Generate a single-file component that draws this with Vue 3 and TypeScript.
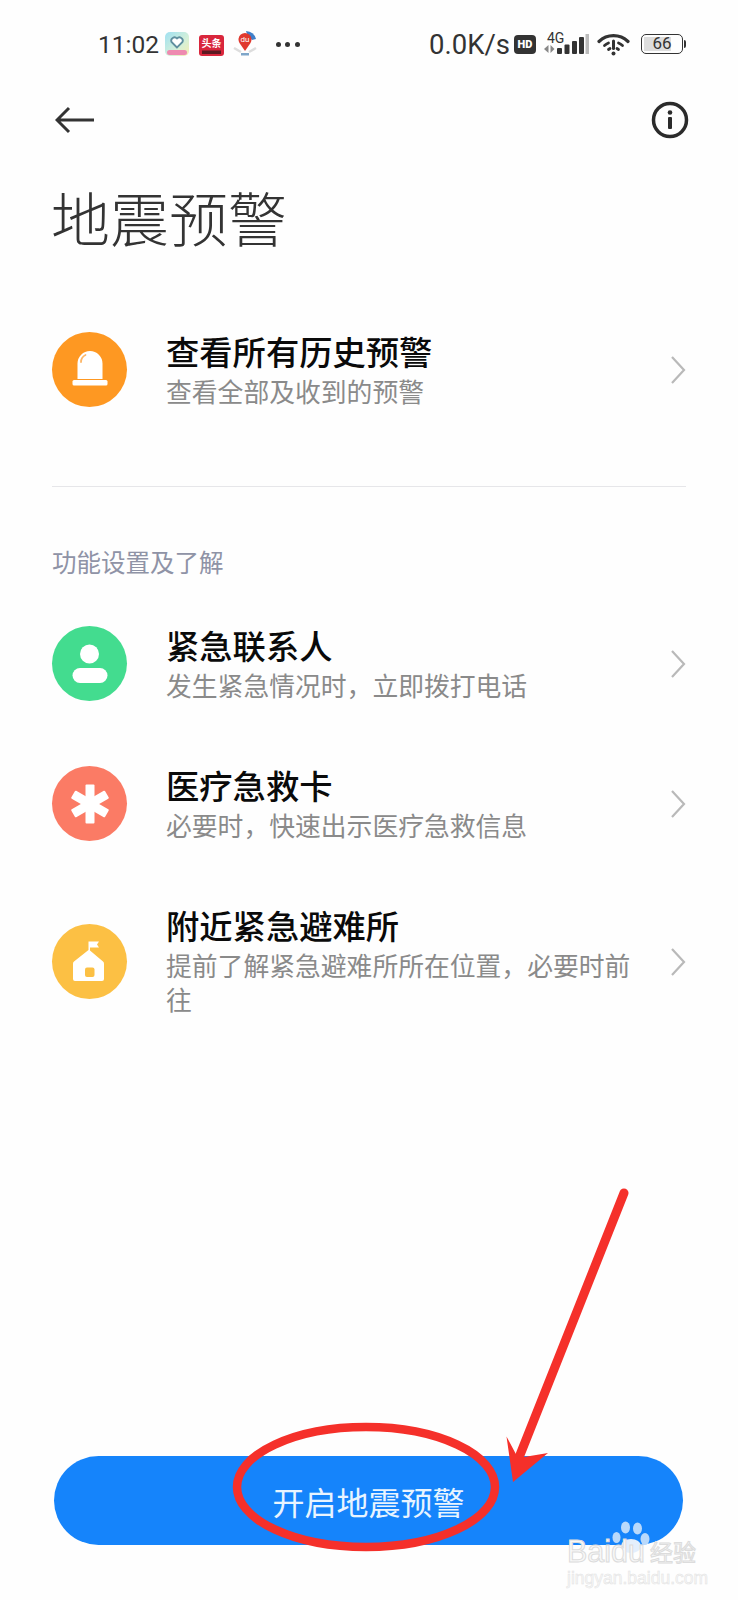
<script setup lang="ts">
interface Row {
    title: string;
    sub: string;
    color: string;
    icon: string;
}

const contacts: Row[] = [
    { title: "紧急联系人", sub: "发生紧急情况时，立即拨打电话", color: "#43dc8f", icon: "person" },
    { title: "医疗急救卡", sub: "必要时，快速出示医疗急救信息", color: "#fb7b65", icon: "star" },
    { title: "附近紧急避难所", sub: "提前了解紧急避难所所在位置，必要时前往", color: "#fcc044", icon: "house" },
];
</script>

<template>
    <div class="page">
        <div class="status">
            <span class="time">11:02</span>
            <svg class="app app-a" width="24" height="24" viewBox="0 0 24 24">
                <defs>
                    <linearGradient id="appBg" x1="0" y1="0" x2="1" y2="1">
                        <stop offset="0" stop-color="#9fe0f2" />
                        <stop offset="0.6" stop-color="#d5f0d8" />
                        <stop offset="1" stop-color="#f7eeb0" />
                    </linearGradient>
                </defs>
                <rect width="24" height="24" rx="5" fill="url(#appBg)" />
                <rect x="2" y="18" width="20" height="5" rx="2.5" fill="#ee8ab0" />
                <path d="M12 15.500 6.500 10a3.300 3.300 0 0 1 5.500-3.500 3.300 3.300 0 0 1 5.500 3.500z" fill="#fff" stroke="#5f8f9f" stroke-width="1.800" />
            </svg>
            <svg class="app app-b" width="25" height="21" viewBox="0 0 25 21">
                <rect width="25" height="21" rx="3" fill="#d9263c" />
                <rect x="3" y="15.500" width="19" height="3.500" fill="#5c1a22" />
                <text x="12.500" y="12" class="app-text" text-anchor="middle">头条</text>
            </svg>
            <svg class="app app-c" width="24" height="26" viewBox="0 0 24 26">
                <path d="M13 0a11 11 0 0 1 10 8l-4 1-5-6z" fill="#3f7fc9" />
                <path d="M1 17l7 4M23 17l-7 4" stroke="#ddd" stroke-width="2.500" />
                <path d="M12 20 6.500 12a6.500 6.500 0 1 1 11 0z" fill="#e0392f" />
                <text x="12" y="11" class="du-text" text-anchor="middle">du</text>
                <rect x="8" y="22" width="8" height="2.500" fill="#7fa6c9" />
            </svg>
            <span class="dots">
                <i></i><i></i><i></i>
            </span>
            <span class="status-right">
                <span class="speed">0.0K/s</span>
                <span class="hd">HD</span>
                <span class="signal">
                    <span class="four-g">4G</span>
                    <svg width="46" height="24" viewBox="0 0 46 24">
                        <path d="M5.500 13v8L1 17zM7.500 13v8l4-4z" fill="#888" />
                        <rect x="14" y="16" width="5" height="6" rx="1" fill="#333" />
                        <rect x="21.500" y="12.500" width="5" height="9.500" rx="1" fill="#333" />
                        <rect x="29" y="9" width="5" height="13" rx="1" fill="#333" />
                        <rect x="36" y="5" width="5" height="17" rx="1" fill="#333" />
                        <rect x="42.500" y="2" width="3.500" height="20" fill="#bbb" />
                    </svg>
                </span>
                <svg class="wifi" width="33" height="24" viewBox="0 0 33 24">
                    <g fill="none" stroke="#333" stroke-linecap="round">
                        <path d="M2 9.500a21 21 0 0 1 29 0" stroke-width="3.200" />
                        <path d="M7.500 13.500a13 13 0 0 1 4-2.500M25.500 13.500a13 13 0 0 0-4-2.500" stroke-width="2.800" />
                        <path d="M11.500 17.500l1.500-1M21.500 17.500l-1.500-1" stroke-width="2.800" />
                        <path d="M16.500 9v7.500" stroke-width="3" />
                    </g>
                    <circle cx="16.500" cy="21.500" r="2" fill="#333" />
                </svg>
                <span class="battery">
                    <span class="battery-body"><span class="battery-fill"></span><span class="battery-num">66</span></span>
                    <span class="battery-cap"></span>
                </span>
            </span>
        </div>

        <div class="toolbar">
            <svg width="40" height="28" viewBox="0 0 40 28">
                <path d="M39 14H2M14 2 2 14l12 12" fill="none" stroke="#333" stroke-width="3" />
            </svg>
            <svg width="38" height="38" viewBox="0 0 38 38">
                <circle cx="19" cy="19" r="16.500" fill="none" stroke="#2b2b2b" stroke-width="3.500" />
                <circle cx="19" cy="11.500" r="2.300" fill="#2b2b2b" />
                <rect x="17" y="16" width="4" height="12" rx="1" fill="#2b2b2b" />
            </svg>
        </div>

        <h1 class="title">地震预警</h1>

        <div class="row first">
            <span class="circle" style="background: #fe9822">
                <svg width="40" height="40" viewBox="0 0 40 40">
                    <path d="M7.500 29V13.500a12.500 12.500 0 0 1 25 0V29z" fill="#fff" />
                    <rect x="2.500" y="30" width="35" height="5.500" rx="1.500" fill="#fff" />
                    <path d="M11 12a8 8 0 0 1 4.500-7" fill="none" stroke="#fdb768" stroke-width="1.800" stroke-linecap="round" />
                </svg>
            </span>
            <div class="text">
                <div class="row-title">查看所有历史预警</div>
                <div class="row-sub">查看全部及收到的预警</div>
            </div>
            <svg class="chevron" width="16" height="30" viewBox="0 0 16 30">
                <path d="M2 2 14 15 2 28" fill="none" stroke="#b9b9b9" stroke-width="2.200" />
            </svg>
        </div>

        <div class="divider"></div>
        <div class="section">功能设置及了解</div>

        <div class="list">
            <div v-for="item in contacts" :key="item.title" class="row" :class="{ tall: item.icon === 'house' }">
                <span class="circle" :style="{ background: item.color }">
                    <svg v-if="item.icon === 'person'" width="40" height="44" viewBox="0 0 40 44">
                        <circle cx="19.500" cy="12" r="9.500" fill="#fff" />
                        <rect x="2.500" y="26" width="35" height="15" rx="7.500" fill="#fff" />
                    </svg>
                    <svg v-else-if="item.icon === 'star'" width="40" height="40" viewBox="0 0 40 40">
                        <g fill="#fff">
                            <rect x="15.500" y="0.500" width="9" height="39" rx="1" />
                            <rect x="15.500" y="0.500" width="9" height="39" rx="1" transform="rotate(60 20 20)" />
                            <rect x="15.500" y="0.500" width="9" height="39" rx="1" transform="rotate(120 20 20)" />
                        </g>
                    </svg>
                    <svg v-else width="40" height="52" viewBox="0 0 40 52">
                        <path d="M18.500 5.500H29l-2 3 2 3h-9v3l13 11a3 3 0 0 1 1 2.500v15a2 2 0 0 1-2 2H5a2 2 0 0 1-2-2v-15a3 3 0 0 1 1-2.500l14.500-11.500z" fill="#fff" />
                        <rect x="15" y="31.500" width="9.500" height="9.500" rx="2" fill="#fcc044" />
                    </svg>
                </span>
                <div class="text">
                    <div class="row-title">{{ item.title }}</div>
                    <div class="row-sub">{{ item.sub }}</div>
                </div>
                <svg class="chevron" width="16" height="30" viewBox="0 0 16 30">
                    <path d="M2 2 14 15 2 28" fill="none" stroke="#b9b9b9" stroke-width="2.200" />
                </svg>
            </div>
        </div>

        <button class="action">开启地震预警</button>

        <!-- red marks drawn over the screenshot -->
        <svg class="marks" width="738" height="1600" viewBox="0 0 738 1600">
            <ellipse cx="366" cy="1487" rx="129" ry="60" fill="none" stroke="#f5302a" stroke-width="8.500" />
            <path d="M624 1193 518 1460" fill="none" stroke="#f5302a" stroke-width="9" stroke-linecap="round" />
            <path d="M506.500 1436.500 518 1458 548 1453 513 1482z" fill="#f5302a" />
        </svg>

        <div class="watermark">
            <svg class="paw" width="178" height="60" viewBox="560 1500 178 60">
                <g fill="#b9d9fb">
                    <ellipse cx="625.500" cy="1527.500" rx="4.500" ry="6" />
                    <ellipse cx="637.500" cy="1528.500" rx="4.500" ry="6" />
                    <ellipse cx="616.500" cy="1537.500" rx="4" ry="5.500" />
                    <ellipse cx="645" cy="1539" rx="4.500" ry="6" />
                </g>
                <ellipse cx="631" cy="1546" rx="10" ry="7" fill="#e4effc" />
            </svg>
            <div class="wm-main"><span>Baidu</span><span class="wm-cn">经验</span></div>
            <div class="wm-sub">jingyan.baidu.com</div>
        </div>
    </div>
</template>

<style scoped>
.page {
    position: relative;
    width: 738px;
    height: 1600px;
    display: flex;
    flex-direction: column;
    background: #fefefe;
    overflow: hidden;
    font-family: "Noto Sans CJK SC", "Noto Sans", sans-serif;
}

.status {
    height: 88px;
    box-sizing: border-box;
    padding: 0 52px 0 98px;
    display: flex;
    align-items: center;
    color: #333;
    flex-shrink: 0;
}

.time {
    font-family: Roboto, sans-serif;
    font-size: 24.500px;
}

.speed {
    font-family: Roboto, sans-serif;
    font-size: 27.500px;
}

.app {
    flex-shrink: 0;
}

.app-a {
    margin-left: 6px;
}

.app-b {
    margin-left: 10px;
    margin-top: 3px;
}

.app-c {
    margin-left: 9px;
}

.app-text {
    font-size: 10px;
    font-weight: 700;
    fill: #fff;
}

.du-text {
    font-size: 8px;
    font-family: Roboto, sans-serif;
    fill: #fff;
}

.dots {
    display: flex;
    gap: 4.500px;
    margin-left: 18.500px;

    i {
        width: 5px;
        height: 5px;
        border-radius: 50%;
        background: #333;
    }
}

.status-right {
    margin-left: auto;
    display: flex;
    align-items: center;
}

.hd {
    margin-left: 4px;
    width: 22px;
    height: 19px;
    border-radius: 4px;
    background: #333;
    color: #fff;
    font-family: Roboto, sans-serif;
    font-size: 11px;
    font-weight: 900;
    line-height: 19px;
    text-align: center;
}

.signal {
    position: relative;
    margin-left: 7px;
    width: 46px;
    height: 24px;
    display: flex;
    align-items: flex-end;
}

.four-g {
    position: absolute;
    left: 4px;
    top: -1px;
    font-family: Roboto, sans-serif;
    font-size: 14px;
    line-height: 14px;
}

.wifi {
    margin-left: 8px;
}

.battery {
    margin-left: 11px;
    display: flex;
    align-items: center;
}

.battery-body {
    position: relative;
    box-sizing: border-box;
    width: 42px;
    height: 20px;
    border: 1.500px solid #333;
    border-radius: 5px;
    display: block;
    overflow: hidden;
}

.battery-fill {
    position: absolute;
    left: 2px;
    top: 2px;
    bottom: 2px;
    width: 27px;
    background: #ddd;
}

.battery-num {
    position: absolute;
    inset: 0;
    text-align: center;
    font-family: Roboto, sans-serif;
    font-size: 17px;
    line-height: 17px;
}

.battery-cap {
    width: 2px;
    height: 8px;
    margin-left: 1px;
    background: #333;
    border-radius: 0 2px 2px 0;
}

.toolbar {
    height: 64px;
    padding: 0 49px 0 55px;
    display: flex;
    align-items: center;
    justify-content: space-between;
    flex-shrink: 0;
}

.title {
    margin: 34px 0 0 51px;
    font-size: 59px;
    font-weight: 300;
    line-height: 62px;
    color: #333;
}

.row {
    display: flex;
    align-items: center;
    padding: 0 52px;
}

.row.first {
    margin-top: 83px;
}

.circle {
    width: 75px;
    height: 75px;
    border-radius: 50%;
    display: flex;
    align-items: center;
    justify-content: center;
    flex-shrink: 0;
}

.tall .circle {
    margin-top: 2px;
}

.tall .chevron {
    margin-top: 3px;
}

.text {
    flex: 1;
    margin: 0 22px 0 39px;
}

.row-title {
    font-size: 33.300px;
    font-weight: 500;
    line-height: 40px;
    color: #0a0a0a;
}

.row-sub {
    margin-top: 3px;
    font-size: 25.800px;
    line-height: 34px;
    color: #8a8a8a;
}

.chevron {
    flex-shrink: 0;
}

.divider {
    height: 1px;
    margin: 78px 52px 0;
    background: #e6e6e9;
}

.section {
    margin: 59px 0 0 52px;
    font-size: 24.500px;
    line-height: 32px;
    color: #8f93a6;
}

.list {
    margin-top: 47px;
    display: flex;
    flex-direction: column;
    gap: 63px;
}

.action {
    margin: auto 55px 55px 54px;
    height: 89px;
    border: none;
    border-radius: 45px;
    background: #1584fb;
    color: #e8f4ff;
    font-family: inherit;
    font-size: 32px;
    flex-shrink: 0;
}

.marks {
    position: absolute;
    left: 0;
    top: 0;
    pointer-events: none;
}

.watermark {
    position: absolute;
    left: 567px;
    top: 1535px;
    width: 140px;
    color: #f8f8f8;
    -webkit-text-stroke: 1px #dcdcdc;
    white-space: nowrap;
}

.paw {
    position: absolute;
    left: -7px;
    top: -35px;
}

.wm-main {
    position: relative;
    display: flex;
    align-items: center;
    gap: 5px;
    font-family: "Liberation Sans", sans-serif;
    font-size: 30.500px;
    line-height: 32px;
}

.wm-cn {
    font-family: "Noto Sans CJK SC", sans-serif;
    font-size: 23px;
}

.wm-sub {
    position: relative;
    margin-top: 1px;
    font-family: "Liberation Sans", sans-serif;
    font-size: 17.500px;
    line-height: 20px;
    -webkit-text-stroke: 0.500px #e2e2e2;
}
</style>
